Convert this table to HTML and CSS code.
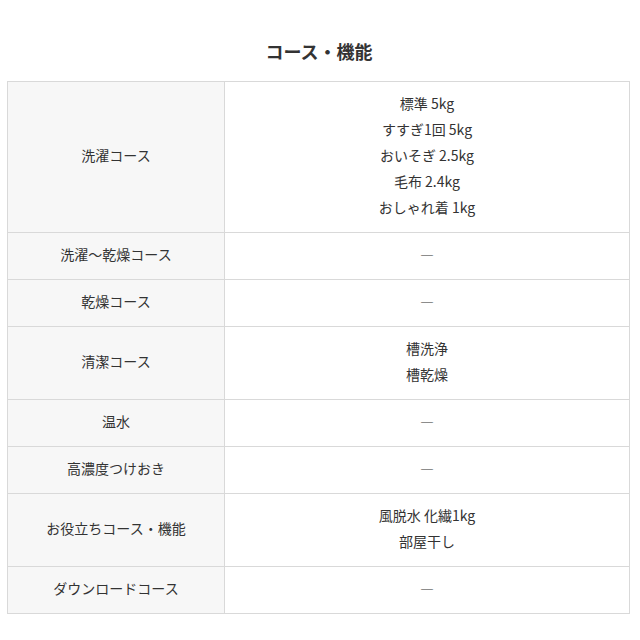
FILE: index.html
```html
<!DOCTYPE html>
<html lang="ja">
<head>
<meta charset="utf-8">
<link rel="stylesheet" href="styles.css">
</head>
<body>
<div class="page">
  <h2 class="title">コース・機能</h2>
  <table class="spec">
    <colgroup><col class="col-head"><col class="col-body"></colgroup>
    <tbody>
      <tr><th>洗濯コース</th><td>標準 5kg<br>すすぎ1回 5kg<br>おいそぎ 2.5kg<br>毛布 2.4kg<br>おしゃれ着 1kg</td></tr>
      <tr><th>洗濯～乾燥コース</th><td>―</td></tr>
      <tr><th>乾燥コース</th><td>―</td></tr>
      <tr><th>清潔コース</th><td>槽洗浄<br>槽乾燥</td></tr>
      <tr><th>温水</th><td>―</td></tr>
      <tr><th>高濃度つけおき</th><td>―</td></tr>
      <tr><th>お役立ちコース・機能</th><td>風脱水 化繊1kg<br>部屋干し</td></tr>
      <tr><th>ダウンロードコース</th><td>―</td></tr>
    </tbody>
  </table>
</div>
</body>
</html>
```

FILE: styles.css
```css
html, body {
  margin: 0;
  padding: 0;
  background: #fff;
}
.page {
  padding: 36px 10px 0 7px;
  font-family: "Noto Sans CJK JP", "Noto Sans", sans-serif;
  color: #333;
}
.title {
  margin: 0 0 15px;
  font-size: 18px;
  line-height: 30px;
  font-weight: bold;
  text-align: center;
  color: #333;
  padding-left: 1px;
}
.spec {
  width: 623px;
  border-collapse: collapse;
  table-layout: fixed;
  font-size: 14px;
}
.col-head { width: 217px; }
.spec th, .spec td {
  border: 1px solid #d9d9d9;
  padding: 8px 8px 12px;
  line-height: 26px;
  text-align: center;
  vertical-align: middle;
  font-weight: normal;
  color: #333;
}
.spec th {
  background: #f7f7f7;
}
.spec td {
  background: #fff;
}
```
